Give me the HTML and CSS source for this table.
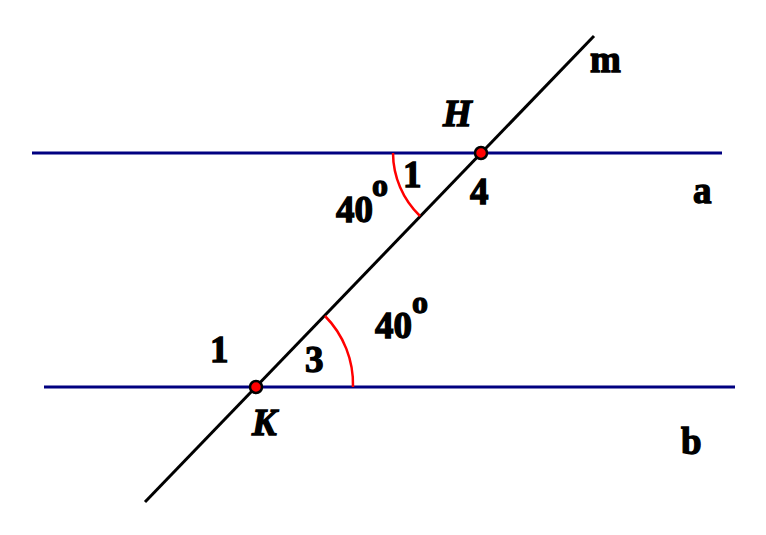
FILE: index.html
```html
<!DOCTYPE html>
<html>
<head>
<meta charset="utf-8">
<link rel="stylesheet" href="styles.css">
</head>
<body>
<svg class="figure" width="766" height="535" viewBox="0 0 766 535">
  <line class="par" x1="32" y1="153" x2="722" y2="153"/>
  <line class="par" x1="44" y1="387" x2="735" y2="387"/>
  <line class="trans" x1="145" y1="502" x2="594" y2="36"/>
  <path class="arc" d="M393 153 A88 88 0 0 0 420 216"/>
  <path class="arc" d="M325 316 A97 97 0 0 1 353 387"/>
  <circle class="pt" cx="481" cy="153" r="6"/>
  <circle class="pt" cx="256" cy="387" r="6"/>
  <text class="lbl" x="590" y="72">m</text>
  <text class="lbl it" x="443" y="126">H</text>
  <text class="lbl" x="403" y="187">1</text>
  <text class="lbl" x="470" y="204">4</text>
  <text class="lbl" x="336" y="222">40</text>
  <text class="lbl sup" x="372" y="196">o</text>
  <text class="lbl" x="693" y="203">a</text>
  <text class="lbl" x="210" y="362">1</text>
  <text class="lbl" x="305" y="372">3</text>
  <text class="lbl" x="375" y="338">40</text>
  <text class="lbl sup" x="412" y="313">o</text>
  <text class="lbl it" x="252" y="435">K</text>
  <text class="lbl" x="681" y="454">b</text>
</svg>
</body>
</html>
```
FILE: styles.css
```css
html, body {
  margin: 0;
  padding: 0;
  background: #ffffff;
}
.figure {
  display: block;
}
.par {
  stroke: #000080;
  stroke-width: 3;
}
.trans {
  stroke: #000000;
  stroke-width: 3;
}
.arc {
  fill: none;
  stroke: #ff0000;
  stroke-width: 2.5;
}
.pt {
  fill: #ff0000;
  stroke: #000000;
  stroke-width: 2.5;
}
.lbl {
  font-family: "Liberation Serif", "Times New Roman", serif;
  font-weight: bold;
  font-size: 37px;
  fill: #000000;
  stroke: #000000;
  stroke-width: 1.3;
}
.sup {
  font-size: 32px;
}
.it {
  font-style: italic;
}
```
